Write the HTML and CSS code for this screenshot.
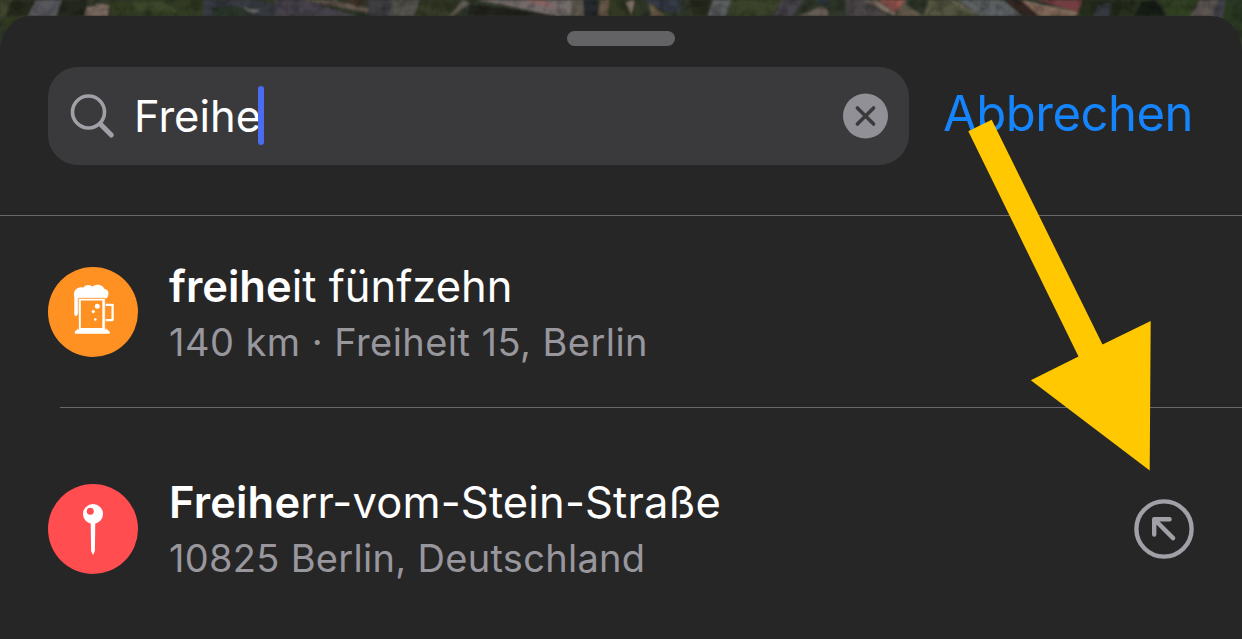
FILE: index.html
```html
<!DOCTYPE html>
<html lang="de">
<head>
<meta charset="utf-8">
<title>Karten – Suche</title>
<link rel="stylesheet" href="styles.css">
</head>
<body>
<main class="screen">
  <svg class="map" viewBox="0 0 1242 64" aria-hidden="true">
    <defs>
      <filter id="soft" x="-2%" y="-10%" width="104%" height="120%"><feGaussianBlur stdDeviation="0.8"/></filter>
      <filter id="grain" x="0" y="0" width="100%" height="100%">
        <feTurbulence type="fractalNoise" baseFrequency="0.09" numOctaves="3" seed="8"/>
        <feColorMatrix values="0 0 0 0 0  0 0 0 0 0  0 0 0 0 0  2.4 0 0 0 -0.95"/>
      </filter>
    </defs>
    <rect width="1242" height="64" fill="#30372a"/>
    <g filter="url(#soft)">
      <path fill="#454c31" d="M0 0h12l-7 16-5 3z"/>
      <path fill="#252c1b" d="M12 0h24l-8 16H6z"/>
      <path fill="#57575b" d="M36 0h26l-6 16H28z"/>
      <path fill="#23281b" d="M62 0h25v16H57z"/>
      <path fill="#79675f" d="M96 3l13 2-1 11H84l3-9 9-1z"/>
      <path fill="#303b20" d="M109 0h94v16h-94z"/>
      <path fill="#3a4729" d="M130 2l32 0 20 11-44-2z"/>
      <path fill="#393b43" d="M203 0h50l22 5v11h-72z"/>
      <path fill="#2c3429" d="M212 8l20-3 20 6-5 5h-35z"/>
      <path fill="#6a6d67" d="M243 7l7 2 9 1-3 3-8-1z"/>
      <path fill="#444149" d="M275 0h30l50 16h-80z"/>
      <path fill="#655850" d="M303 0h30l35 8v5l-45-9z"/>
      <path fill="#3d3228" d="M342 0h27l-12 7z"/>
      <path fill="#3c3e43" d="M369 0h23v16h-24z"/>
      <path fill="#55524d" d="M392 0h35v16h-37z"/>
      <path fill="#353a28" d="M420 0h39v16h-45z"/>
      <path fill="#645d56" d="M462 0l8 3-8 6-10 7h-3l7-7z"/>
      <path fill="#20201d" d="M470 4l94 12h-97z"/>
      <path fill="#736b6b" d="M477 0h94v16h-14l-44-9z"/>
      <path fill="#846360" d="M523 0l25 0 5 8-17-3z"/>
      <path fill="#5c574d" d="M571 0h12l2 16h-14z"/>
      <path fill="#252c2d" d="M583 0h14l3 16h-16z"/>
      <path fill="#665747" d="M600 0h9l-1 16h-10z"/>
      <path fill="#333923" d="M609 0h31v16h-30z"/>
      <path fill="#807269" d="M626 3l8-3v3l-3 12z"/>
      <path fill="#343a46" d="M645 0h37l-3 13-18-3z"/>
      <path fill="#685944" d="M649 3l17 13h-15z"/>
      <path fill="#27291f" d="M690 0h21l-3 16h-15z"/>
      <path fill="#5b5e61" d="M713 0h18l-5 16h-18z"/>
      <path fill="#3b432b" d="M731 0h51l-10 16h-45z"/>
      <path fill="#46434b" d="M782 0h22l-12 16h-18z"/>
      <path fill="#655c54" d="M798 16l24-10 6 4v6z"/>
      <path fill="#2c3543" d="M814 0h14v6z"/>
      <path fill="#484447" d="M845 0h20l24 16h-42z"/>
      <path fill="#7d6a62" d="M866 0h10l20 12-2 4-12-6z"/>
      <path fill="#97554f" d="M878 0h28l-10 12z"/>
      <path fill="#64594b" d="M904 5l17 11h-25z"/>
      <path fill="#53543f" d="M928 0h30l18 16h-52z"/>
      <path fill="#5c6062" d="M958 0h45l21 16h-44z"/>
      <path fill="#302821" d="M1003 0h20l20 16h-21z"/>
      <path fill="#806759" d="M1021 0l58 12-4 4h-36z"/>
      <path fill="#733d43" d="M1036 0h46l-4 12z"/>
      <path fill="#252d1d" d="M1082 0h65l-13 16h-56z"/>
      <path fill="#363941" d="M1098 5l14-3-3 14h-16z"/>
      <path fill="#171a14" d="M1142 2l13-2 11 16h-32z"/>
      <path fill="#324022" d="M1158 0h42l-11 16h-20z"/>
      <path fill="#5c5552" d="M1200 0h18l-5 16h-23z"/>
      <path fill="#404149" d="M1218 0h8l-3 22h-12z"/>
      <path fill="#293820" d="M1226 0h16v40l-20-20z"/>
      <path fill="#333a23" d="M0 20l12-5 8 5L5 32z"/>
      <g fill="none" stroke="#8a7c70" stroke-width=".8">
        <path d="M864 0l31 15 13-15M904 4l18 12 10-10M950 0l30 16M1025 1l50 13"/>
      </g>
    </g>
    <rect width="1242" height="64" filter="url(#grain)" opacity=".25"/>
  </svg>

  <section class="sheet">
    <div class="grabber"></div>
    <header class="search-row">
      <div class="search-field">
        <svg class="search-icon" viewBox="0 0 46 46" aria-hidden="true">
          <circle cx="19.5" cy="19" r="16"/>
          <path class="handle" d="M31.300 31L42.300 42"/>
        </svg>
        <span class="query">Freihe</span>
        <span class="caret"></span>
        <svg class="clear-icon" viewBox="0 0 46 46" aria-hidden="true">
          <circle cx="22.500" cy="23" r="22.500"/>
          <path d="M14.400 14.900l16.200 16.200M30.600 14.900L14.400 31.100"/>
        </svg>
      </div>
      <span class="cancel">Abbrechen</span>
    </header>

    <article class="result first">
      <svg class="badge orange" viewBox="0.7 1.2 90 90" aria-hidden="true">
        <path fill="#fff" d="M27 46V31C25 25 31 20 36 22C38 18 44 19 45 21C50 17 56 20 57 23C63 24 62 32 58 33H32V44C31 52 26 52 27 46z"/>
        <path fill="#fff" d="M30.5 33H58v29l4.500 4v2H27.500v-2l4-4z"/>
        <path fill="#ff9122" d="M33.500 34.600H55v27.500H33.500z"/>
        <path fill="none" stroke="#fff" stroke-width="2.300" stroke-linejoin="round" d="M57 39h8.300v15.300H57"/>
        <path fill="none" stroke="#ff9122" stroke-width=".8" d="M31 64V32.500H58V64"/>
        <circle cx="50" cy="40.500" r="2.500" fill="#fff"/>
        <circle cx="46" cy="45.800" r="1.600" fill="#fff"/>
        <circle cx="48" cy="53.700" r="1.300" fill="#fff"/>
      </svg>
      <div class="labels">
        <div class="title name-one"><b>freihe</b>it fünfzehn</div>
        <div class="subtitle place-one">140 km · Freiheit 15, Berlin</div>
      </div>
    </article>

    <article class="result second">
      <svg class="badge red" viewBox="0 0 90 90" aria-hidden="true">
        <path fill="#fff" d="M42.700 38h4.600l-.4 29-1.900 4-1.900-4z"/>
        <circle cx="45" cy="30" r="10" fill="#fff"/>
        <circle cx="42.300" cy="27.300" r="3.500" fill="#ff4d50"/>
      </svg>
      <div class="labels">
        <div class="title name-two"><b>Freihe</b>rr-vom-Stein-Straße</div>
        <div class="subtitle place-two">10825 Berlin, Deutschland</div>
      </div>
      <svg class="fill-icon" viewBox="0 0 60 60" aria-hidden="true">
        <circle cx="30" cy="30" r="27.600"/>
        <path d="M20.200 35.600V20.300H35.600M20.200 20.300L39.100 39.100"/>
      </svg>
    </article>
  </section>

  <svg class="pointer" viewBox="0 0 1242 639" aria-hidden="true">
    <path d="M968.300 131.300L991.700 119.700L1102.500 344.500L1150.700 321L1149.700 470.500L1030.800 380.300L1078.500 356.500z"/>
  </svg>
</main>
</body>
</html>
```
FILE: styles.css
```css
* { box-sizing: border-box; }

body {
  margin: 0;
  background: #272627;
  font-family: Inter, "Liberation Sans", sans-serif;
}

.screen {
  position: relative;
  width: 1242px;
  height: 639px;
  padding-top: 16px;
  overflow: hidden;
}

.map {
  position: absolute;
  top: 0;
  left: 0;
  width: 1242px;
  height: 64px;
}

.sheet {
  position: relative;
  display: flex;
  flex-direction: column;
  height: 623px;
  background: #272627;
  border-radius: 30px 30px 0 0 / 37px 37px 0 0;
}

.grabber {
  width: 108px;
  height: 15px;
  margin: 15px auto 21px;
  border-radius: 8px;
  background: #636365;
}

.search-row {
  display: flex;
  height: 149px;
  padding-left: 48px;
  border-bottom: 1px solid #69696b;
}

.search-field {
  display: flex;
  align-items: center;
  width: 861px;
  height: 98px;
  padding: 0 20px 1px 21px;
  border-radius: 30px;
  background: #3a3a3c;
}

.search-icon {
  width: 46px;
  height: 46px;
  fill: none;
  stroke: #a1a0a7;
  stroke-width: 3.6;
}

.handle { stroke-width: 5; stroke-linecap: round; }

.query {
  margin-left: 19px;
  width: 124px;
  color: #fff;
  font-size: 43.5px;
  line-height: 54px;
  white-space: nowrap;
}

.caret {
  width: 6px;
  height: 59px;
  border-radius: 3px;
  background: #4a6cf0;
  z-index: 1;
}

.clear-icon { width: 46px; height: 46px; margin-left: auto; }
.clear-icon circle { fill: #919096; }
.clear-icon path { stroke: #3a3a3c; stroke-width: 3.6; stroke-linecap: round; }

.cancel {
  margin: 17px 0 0 34px;
  color: #1485fd;
  font-size: 49px;
  letter-spacing: -0.5px;
  line-height: 60px;
  white-space: nowrap;
}

.result {
  display: flex;
  margin-left: 48px;
}

.first { position: relative; height: 192px; padding-top: 51px; }
.first::after {
  content: "";
  position: absolute;
  left: 12px;
  right: 0;
  bottom: 0;
  height: 1px;
  background: #69696b;
}
.second { padding: 76px 48px 0 0; }

.badge { width: 90px; height: 90px; border-radius: 50%; }
.orange { background: #ff9122; }
.red { background: #ff4d50; }

.labels { margin: -9px 0 0 31px; white-space: nowrap; }
.second .labels { margin-top: -10px; }

.title {
  height: 56px;
  color: #fff;
  font-size: 43.5px;
  line-height: 56px;
}
.title b { font-weight: 600; }

.name-two { letter-spacing: 0.15px; }

.subtitle {
  height: 56px;
  color: #98979d;
  font-size: 38px;
  line-height: 56px;
}

.place-one { letter-spacing: 0.45px; }
.place-two { letter-spacing: 0.3px; }

.fill-icon {
  width: 60px;
  height: 60px;
  margin: 15px 0 0 auto;
  fill: none;
  stroke: #a1a0a7;
  stroke-width: 4.4;
  stroke-linecap: round;
  stroke-linejoin: round;
}

.pointer {
  position: absolute;
  top: 0;
  left: 0;
  width: 1242px;
  height: 639px;
  fill: #ffc800;
  pointer-events: none;
}
```
